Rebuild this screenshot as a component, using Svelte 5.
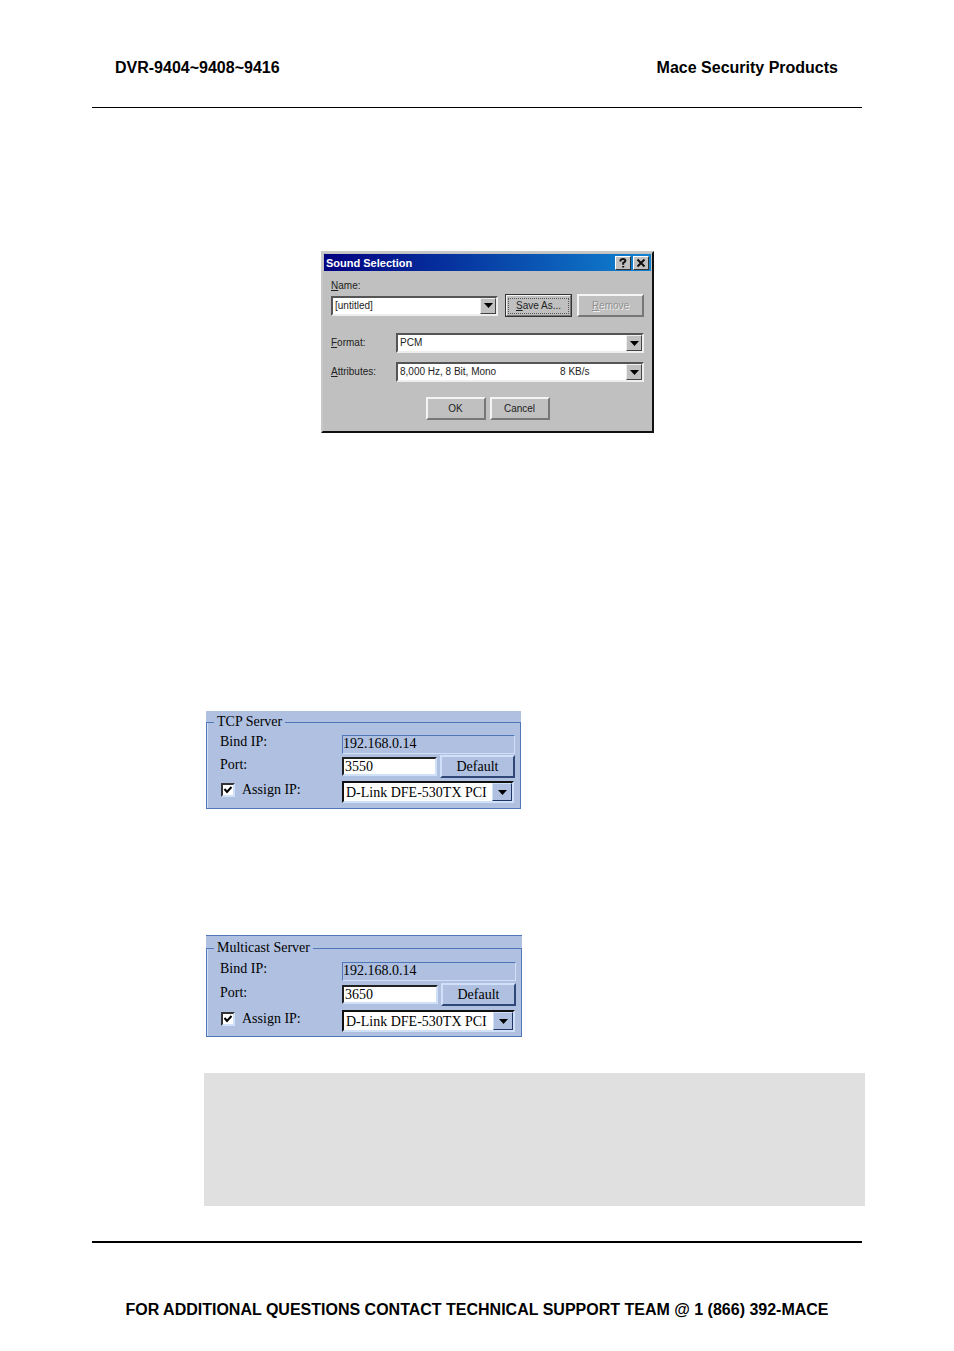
<script>
  const gap = '\u00a0'.repeat(23);

  const servers = [
    { id: 'tcp', title: 'TCP Server', ip: '192.168.0.14', port: '3550', adapter: 'D-Link DFE-530TX PCI' },
    { id: 'multicast', title: 'Multicast Server', ip: '192.168.0.14', port: '3650', adapter: 'D-Link DFE-530TX PCI' }
  ];
</script>

{#snippet arrow()}
  <svg class="arrow" viewBox="0 0 9 5" aria-hidden="true"><path d="M0 0h9L4.5 5z" /></svg>
{/snippet}

<div class="page">
  <header>
    <span>DVR-9404~9408~9416</span>
    <span>Mace Security Products</span>
  </header>

  <main>
    <section class="dialog" aria-labelledby="dialog-title">
      <div class="titlebar">
        <h2 id="dialog-title">Sound Selection</h2>
        <button type="button" class="caption" aria-label="Help">
          <svg viewBox="0 0 10 10"><path d="M2.5 3.5V2.2Q3 1 5 1t2.5 1.6Q7.5 4 5.2 5v1.8M5.2 8v1.5" /></svg>
        </button>
        <button type="button" class="caption" aria-label="Close">
          <svg viewBox="0 0 10 10"><path d="M1.5 1.5l7 7M8.5 1.5l-7 7" /></svg>
        </button>
      </div>
      <form class="sound">
        <label class="name-label" for="name"><u>N</u>ame:</label>
        <div class="name-row">
          <span class="combo">
            <select id="name"><option>[untitled]</option></select>
            <span class="drop">{@render arrow()}</span>
          </span>
          <button type="button" class="push default"><span><u>S</u>ave As...</span></button>
          <button type="button" class="push" disabled><u>R</u>emove</button>
        </div>
        <div class="field">
          <label for="format"><u>F</u>ormat:</label>
          <span class="combo">
            <select id="format"><option>PCM</option></select>
            <span class="drop">{@render arrow()}</span>
          </span>
        </div>
        <div class="field">
          <label for="attributes"><u>A</u>ttributes:</label>
          <span class="combo">
            <select id="attributes"><option>8,000 Hz, 8 Bit, Mono{gap}8 KB/s</option></select>
            <span class="drop">{@render arrow()}</span>
          </span>
        </div>
        <div class="actions">
          <button type="button" class="push">OK</button>
          <button type="button" class="push">Cancel</button>
        </div>
      </form>
    </section>

    {#each servers as s (s.id)}
      <form class="server {s.id}">
        <fieldset>
          <legend>{s.title}</legend>
          <div class="rows">
            <label for="{s.id}-ip">Bind IP:</label>
            <input id="{s.id}-ip" class="bound" value={s.ip} readonly />
            <label for="{s.id}-port">Port:</label>
            <div class="port">
              <input id="{s.id}-port" value={s.port} />
              <button type="button">Default</button>
            </div>
            <label class="assign">
              <input type="checkbox" checked />
              <span>Assign IP:</span>
            </label>
            <span class="adapter">
              <select aria-label="Network adapter"><option>{s.adapter}</option></select>
              <span class="drop">{@render arrow()}</span>
            </span>
          </div>
        </fieldset>
      </form>
    {/each}

    <aside></aside>
  </main>

  <footer>FOR ADDITIONAL QUESTIONS CONTACT TECHNICAL SUPPORT TEAM @ 1 (866) 392-MACE</footer>
</div>

<style>
  :global(body) {
    margin: 0;
    background: #fff;
  }

  .page,
  .page * {
    box-sizing: border-box;
  }

  .page {
    padding: 0 92px;
    color: #000;
    font-family: 'Liberation Sans', Arial, sans-serif;
  }

  header,
  footer {
    font-size: 16px;
    font-weight: bold;
    line-height: 20px;
  }

  header {
    display: flex;
    justify-content: space-between;
    padding: 58px 24px 29px 23px;
    border-bottom: 1px solid #000;
  }

  footer {
    margin-top: 35px;
    padding: 57px 0 31px;
    border-top: 2px solid #000;
    text-align: center;
  }

  main {
    display: flex;
    flex-direction: column;
    align-items: flex-start;
    padding: 143px 0 0 112px;
  }

  button,
  input,
  select {
    margin: 0;
    padding: 0;
    border: 0;
    border-radius: 0;
    outline: 0;
    color: inherit;
    font: inherit;
  }

  select {
    appearance: none;
    width: 100%;
    height: 100%;
    background: #fff;
  }

  .arrow {
    width: 9px;
    height: 5px;
  }

  .drop {
    position: absolute;
    display: flex;
    align-items: center;
    justify-content: center;
    pointer-events: none;
  }

  /* Sound Selection dialog */
  .dialog {
    width: 333px;
    margin: 0 0 278px 117px;
    padding: 1px;
    border: 2px solid;
    border-color: #c8c8c8 #111 #111 #c8c8c8;
    background: #c0c0c0;
    color: #222;
    font-size: 10px;
    line-height: 14px;
  }

  .titlebar {
    display: flex;
    align-items: center;
    gap: 2px;
    height: 17px;
    padding: 0 2px;
    background: linear-gradient(90deg, #000080, #1084d0);
  }

  h2 {
    flex: 1;
    margin: 0;
    color: #fff;
    font-size: 11px;
    line-height: 14px;
  }

  .caption {
    display: grid;
    place-items: center;
    width: 16px;
    height: 14px;
    border: 1px solid;
    border-color: #fff #333 #333 #fff;
    background: #c0c0c0;
  }

  .caption svg {
    width: 10px;
    height: 10px;
    fill: none;
    stroke: #111;
    stroke-width: 2;
  }

  .sound {
    padding: 8px 7px 10px;
  }

  .name-label {
    display: block;
    height: 15px;
  }

  .name-row {
    display: flex;
    align-items: center;
    gap: 5px;
    margin-bottom: 16px;
  }

  .name-row .combo {
    margin-right: 2px;
  }

  .combo {
    position: relative;
    flex: 1;
    height: 20px;
    border: 2px solid;
    border-color: #555 #eee #eee #555;
  }

  .combo select {
    display: block;
    padding: 0 18px 0 2px;
  }

  .combo .drop {
    top: 0;
    right: 0;
    width: 16px;
    height: 16px;
    border: 1px solid;
    border-color: #eee #444 #444 #eee;
    background: #c0c0c0;
  }

  .push {
    width: 67px;
    height: 23px;
    border: 2px solid;
    border-color: #f4f4f4 #777 #777 #f4f4f4;
    background: #c0c0c0;
  }

  .push.default {
    padding: 1px;
    outline: 1px solid #333;
    outline-offset: -1px;
  }

  .default span {
    display: block;
    border: 1px dotted #555;
  }

  .push:disabled {
    color: #909090;
    text-shadow: 1px 1px #eee;
  }

  .field {
    display: flex;
    align-items: center;
    margin-bottom: 9px;
  }

  .field label {
    width: 65px;
  }

  .actions {
    display: flex;
    justify-content: center;
    gap: 4px;
    padding-top: 6px;
  }

  .actions .push {
    width: 60px;
  }

  /* Server panels */
  .server {
    width: 315px;
    margin: 0 0 126px 2px;
    background: #b0c0e0;
    font-family: 'Liberation Serif', 'Times New Roman', serif;
    font-size: 14px;
    line-height: 20px;
  }

  .server.multicast {
    width: 316px;
    margin-bottom: 36px;
    padding-top: 1px;
    border-top: 1px solid #5078b8;
  }

  fieldset {
    min-width: 0;
    margin: 0;
    padding: 0 5px 3px 13px;
    border: 1px solid #5078b8;
    box-shadow: inset 1px 0 #d0e0f8;
  }

  .multicast fieldset {
    padding-bottom: 2px;
  }

  legend {
    margin-left: -6px;
    padding: 0 3px;
    line-height: 22px;
  }

  .rows {
    display: grid;
    grid-template-columns: 122px 1fr;
    grid-template-rows: 20px 23px 26px;
    align-items: center;
    padding-top: 1px;
    row-gap: 1px;
  }

  .multicast .rows {
    row-gap: 2px;
    padding-top: 2px;
  }

  .rows label {
    padding-bottom: 4px;
  }

  .rows input:not([type='checkbox']) {
    min-width: 0;
    width: 100%;
    height: 19px;
    padding: 0 1px;
    border: 2px solid;
    border-color: #222 #d0e0f8 #d0e0f8 #222;
    background: #fff;
  }

  .rows input.bound:not([type='checkbox']) {
    padding: 0;
    border-width: 1px;
    border-color: #5078b8 #d0e0f8 #d0e0f8 #5078b8;
    background: #b0c0e0;
  }

  .port {
    display: grid;
    grid-template-columns: 1fr 75px;
    align-items: center;
    gap: 3px;
  }

  .port button {
    height: 23px;
    border: 2px solid;
    border-color: #d0e0f8 #304878 #304878 #d0e0f8;
    background: #b0c0e0;
  }

  .assign {
    display: flex;
    align-items: center;
    gap: 7px;
    padding-left: 1px;
  }

  .assign input {
    appearance: none;
    width: 14px;
    height: 14px;
    border: 2px solid;
    border-color: #333 #d0e0f8 #d0e0f8 #333;
    background: #fff url("data:image/svg+xml,%3Csvg xmlns='http://www.w3.org/2000/svg' viewBox='0 0 10 10'%3E%3Cpath d='M1.5 4l2.5 3 4.5-5' fill='none' stroke='%23000' stroke-width='2'/%3E%3C/svg%3E") center / 10px 10px no-repeat;
  }

  .adapter {
    position: relative;
    height: 22px;
    margin-right: 1px;
    border: 2px solid;
    border-color: #111 #d0e0f8 #d0e0f8 #111;
  }

  .adapter select {
    display: block;
    padding: 0 20px 0 2px;
  }

  .adapter .drop {
    top: 0;
    right: 0;
    width: 20px;
    height: 18px;
    border: 1px solid;
    border-color: #d0e0f8 #203868 #203868 #d0e0f8;
    background: #b0c0e0;
  }

  aside {
    align-self: stretch;
    min-height: 133px;
    margin-right: -3px;
    background: #e0e0e0;
  }
</style>
